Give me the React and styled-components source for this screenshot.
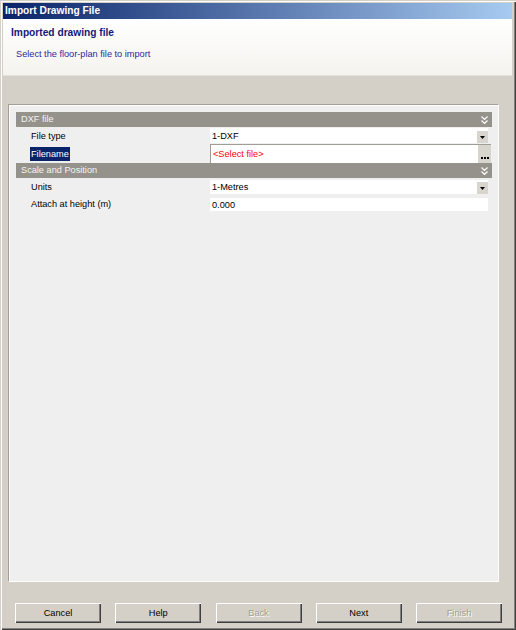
import React from 'react';
import styled, { createGlobalStyle } from 'styled-components';

const GlobalStyle = createGlobalStyle`
  html, body { margin: 0; padding: 0; background: #d4d0c8; }
  body { font-family: "Liberation Sans", Arial, sans-serif; }
`;

const Window = styled.div`
  width: 516px;
  height: 630px;
  box-sizing: border-box;
  padding: 3px 4px 4px 3px;
  background: #d4d0c8;
  display: flex;
  flex-direction: column;
  box-shadow: inset 1px 1px 0 #d4d0c8, inset 2px 2px 0 #ffffff,
    inset -1px -1px 0 #404040, inset -2px -2px 0 #808080;
`;

const TitleBar = styled.div`
  height: 16px;
  background: linear-gradient(to right, #0a246a, #a6caf0);
  color: #fff;
  font-weight: bold;
  font-size: 10.2px;
  line-height: 16px;
  padding-left: 2px;
`;

const Header = styled.div`
  height: 57px;
  background: linear-gradient(#ffffff, #f4f3ee);
  border-bottom: 1px solid #e4e1da;
  padding: 7px 0 0 8px;
  box-sizing: border-box;
`;

const HeaderTitle = styled.div`
  font-weight: bold;
  font-size: 10.2px;
  color: #17177c;
  height: 14px;
  line-height: 14px;
`;

const HeaderText = styled.div`
  font-size: 9.2px;
  color: #2a2a9c;
  margin: 8px 0 0 5px;
  line-height: 12px;
`;

const Body = styled.div`
  flex: 1;
  display: flex;
  flex-direction: column;
  padding: 28px 13px 0 5px;
`;

const Grid = styled.div`
  height: 478px;
  box-sizing: border-box;
  background: #f0efef;
  border: 1px solid;
  border-color: #a29e96 #ffffff #ffffff #a29e96;
  box-shadow: inset 1px 1px 0 #ffffff;
  padding: 7px 6px 0 7px;
`;

const Category = styled.div`
  height: 15px;
  background: #95918b;
  color: #f4f4f2;
  font-size: 9.2px;
  line-height: 15px;
  padding: 0 4px 0 5px;
  display: flex;
  justify-content: space-between;
  align-items: center;
`;

const Row = styled.div`
  height: ${p => p.$h}px;
  display: flex;
`;

const Label = styled.div`
  width: 180px;
  padding-left: 14px;
  font-size: 9.2px;
  color: #000;
  display: flex;
  align-items: center;
`;

const LabelText = styled.span`
  padding: 1px 1px;
  line-height: 12px;
  background: ${p => (p.$selected ? '#0a246a' : 'transparent')};
  color: ${p => (p.$selected ? '#fff' : '#000')};
`;

const Value = styled.div`
  margin-top: ${p => p.$top}px;
  height: ${p => p.$h}px;
  width: 278px;
  background: #fff;
  display: flex;
  align-items: center;
  justify-content: space-between;
  font-size: 9.2px;
  padding-left: 2px;
  box-sizing: border-box;
`;

const EditField = styled.div`
  width: 281px;
  height: 19px;
  box-sizing: border-box;
  background: #fff;
  border-top: 1px solid #a09c96;
  border-left: 1px solid #a09c96;
  display: flex;
  align-items: center;
  justify-content: space-between;
  font-size: 9.2px;
  color: #ff0000;
  padding-left: 2px;
`;

const DropButton = styled.div`
  width: 11px;
  height: 12px;
  background: #d8d5ce;
  align-self: flex-end;
  display: flex;
  align-items: center;
  justify-content: center;
`;

const DotsButton = styled.div`
  width: 13px;
  height: 18px;
  background: #d8d5ce;
  display: flex;
  align-items: flex-end;
  justify-content: center;
  padding-bottom: 4px;
  box-sizing: border-box;
`;

const Footer = styled.div`
  display: flex;
  justify-content: space-between;
  padding: 21px 0 0 7px;
  margin-right: -3px;
`;

const Button = styled.button`
  width: 86px;
  height: 20px;
  padding: 0;
  background: #d4d0c8;
  border: none;
  font-family: "Liberation Sans", Arial, sans-serif;
  font-size: 9.2px;
  color: ${p => (p.disabled ? '#a09d96' : '#000')};
  text-shadow: ${p => (p.disabled ? '1px 1px 0 #fff' : 'none')};
  box-shadow: inset 1px 1px 0 #ffffff, inset -1px -1px 0 #404040,
    inset -2px -2px 0 #808080;
`;

const Chevron = () => (
  <svg width="7" height="8" viewBox="0 0 7 8">
    <path d="M0.5 0.5 L3.5 3.5 L6.5 0.5 M0.5 4.5 L3.5 7.5 L6.5 4.5" stroke="#fff" strokeWidth="1.2" fill="none" />
  </svg>
);

const Arrow = () => (
  <svg width="5" height="3" viewBox="0 0 5 3">
    <path d="M0 0 H5 L2.5 3 Z" fill="#000" />
  </svg>
);

const Dots = () => (
  <svg width="8" height="2" viewBox="0 0 8 2">
    <rect x="0" y="0" width="2" height="2" fill="#000" />
    <rect x="3" y="0" width="2" height="2" fill="#000" />
    <rect x="6" y="0" width="2" height="2" fill="#000" />
  </svg>
);

export default function App() {
  return (
    <>
      <GlobalStyle />
      <Window>
        <TitleBar>Import Drawing File</TitleBar>
        <Header>
          <HeaderTitle>Imported drawing file</HeaderTitle>
          <HeaderText>Select the floor-plan file to import</HeaderText>
        </Header>
        <Body>
          <Grid>
            <Category>
              <span>DXF file</span>
              <Chevron />
            </Category>
            <Row $h={17}>
              <Label><LabelText>File type</LabelText></Label>
              <Value $top={1} $h={15}>
                <span>1-DXF</span>
                <DropButton><Arrow /></DropButton>
              </Value>
            </Row>
            <Row $h={19}>
              <Label><LabelText $selected>Filename</LabelText></Label>
              <EditField>
                <span>&lt;Select file&gt;</span>
                <DotsButton><Dots /></DotsButton>
              </EditField>
            </Row>
            <Category>
              <span>Scale and Position</span>
              <Chevron />
            </Category>
            <Row $h={18}>
              <Label><LabelText>Units</LabelText></Label>
              <Value $top={2} $h={14}>
                <span>1-Metres</span>
                <DropButton><Arrow /></DropButton>
              </Value>
            </Row>
            <Row $h={16}>
              <Label><LabelText>Attach at height (m)</LabelText></Label>
              <Value $top={2} $h={13}>
                <span>0.000</span>
              </Value>
            </Row>
          </Grid>
          <Footer>
            <Button>Cancel</Button>
            <Button>Help</Button>
            <Button disabled>Back</Button>
            <Button>Next</Button>
            <Button disabled>Finish</Button>
          </Footer>
        </Body>
      </Window>
    </>
  );
}
